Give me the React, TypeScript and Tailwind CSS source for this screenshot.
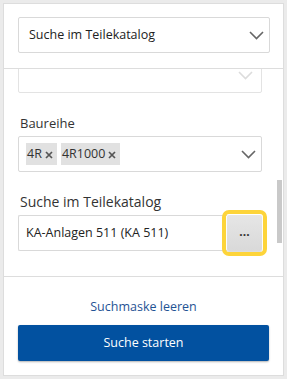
import React from 'react';

function Chevron({ className = '' }: { className?: string }) {
    return (
        <svg width="15" height="9" viewBox="0 0 15 9" className={className} fill="none">
            <polyline points="1,1 7.5,7.5 14,1" stroke="currentColor" strokeWidth="1.6" />
        </svg>
    );
}

function Chip({ label }: { label: string }) {
    return (
        <span className="flex h-[22px] items-center gap-[3px] bg-[#e1e1e1] pl-[1px] pr-[4px] text-[12.5px] text-[#333]">
            {label}
            <svg width="8" height="8" viewBox="0 0 8 8" className="mt-[1px]">
                <path d="M1 1L7 7M7 1L1 7" stroke="#555" strokeWidth="1.7" />
            </svg>
        </span>
    );
}

export default function App() {
    return (
        <div className="h-[379px] w-[287px] bg-[#ebebeb] pl-[3px] pt-[3px] font-['Open_Sans',sans-serif]">
            <div className="flex h-[373px] w-[281px] flex-col border border-[#dddddd] bg-white">
                {/* Top select */}
                <div className="border-b border-[#dddddd] pb-[15px] pl-[14px] pr-[13px] pt-[13px]">
                    <div className="flex h-[36px] items-center justify-between rounded-[2px] border border-[#d9d9d9] pl-[10px] pr-[5px]">
                        <span className="text-[12.5px] text-[#222]">Suche im Teilekatalog</span>
                        <Chevron className="text-[#666]" />
                    </div>
                </div>

                {/* Scrollable area */}
                <div className="relative h-[207px] overflow-hidden">
                    <div className="-mt-[12px] pl-[14px] pr-[21px]">
                        <div className="flex h-[36px] items-center justify-end rounded-[2px] border border-[#e3e3e3] pr-[8px]">
                            <Chevron className="text-[#dcdcdc]" />
                        </div>

                        <div className="mb-[3px] mt-[20px] pl-[2px] text-[13px] leading-[20px] text-[#333]">Baureihe</div>
                        <div className="flex h-[36px] items-center justify-between rounded-[2px] border border-[#d9d9d9] pl-[7px] pr-[5px]">
                            <div className="flex items-center gap-[4px]">
                                <Chip label="4R" />
                                <Chip label="4R1000" />
                            </div>
                            <Chevron className="text-[#666]" />
                        </div>

                        <div className="mb-[3px] mt-[20px] pl-[2px] text-[14px] leading-[20px] text-[#333]">Suche im Teilekatalog</div>
                        <div className="flex h-[36px]">
                            <div className="flex flex-1 items-center rounded-l-[2px] border-y border-l border-[#d9d9d9] pl-[7px] text-[12.5px] text-[#222]">
                                KA-Anlagen 511 (KA 511)
                            </div>
                            <button className="flex w-[35px] items-center justify-center rounded-[2px] bg-gradient-to-b from-[#e6e6e6] to-[#d9d9d9] pb-[2px] text-[12px] font-bold leading-none text-[#333] shadow-[0_1px_1px_rgba(0,0,0,0.15)] outline-4 outline-offset-[1px] outline-[#fdd43a]">
                                ...
                            </button>
                        </div>
                    </div>

                    {/* Scrollbar */}
                    <div className="absolute right-[1px] top-[111px] h-[63px] w-[5px] bg-[#c9c9c9]" />
                </div>

                {/* Bottom actions */}
                <div className="flex flex-1 flex-col items-center border-t border-[#dddddd] px-[14px] pb-[14px] pt-[20px]">
                    <a className="text-[12.5px] leading-[20px] text-[#1f5394]">Suchmaske leeren</a>
                    <button className="mt-[8px] h-[36px] w-full rounded-[2px] bg-[#0251a0] text-[12.5px] text-white shadow-[0_1px_2px_rgba(0,0,0,0.3)]">
                        Suche starten
                    </button>
                </div>
            </div>
        </div>
    );
}
